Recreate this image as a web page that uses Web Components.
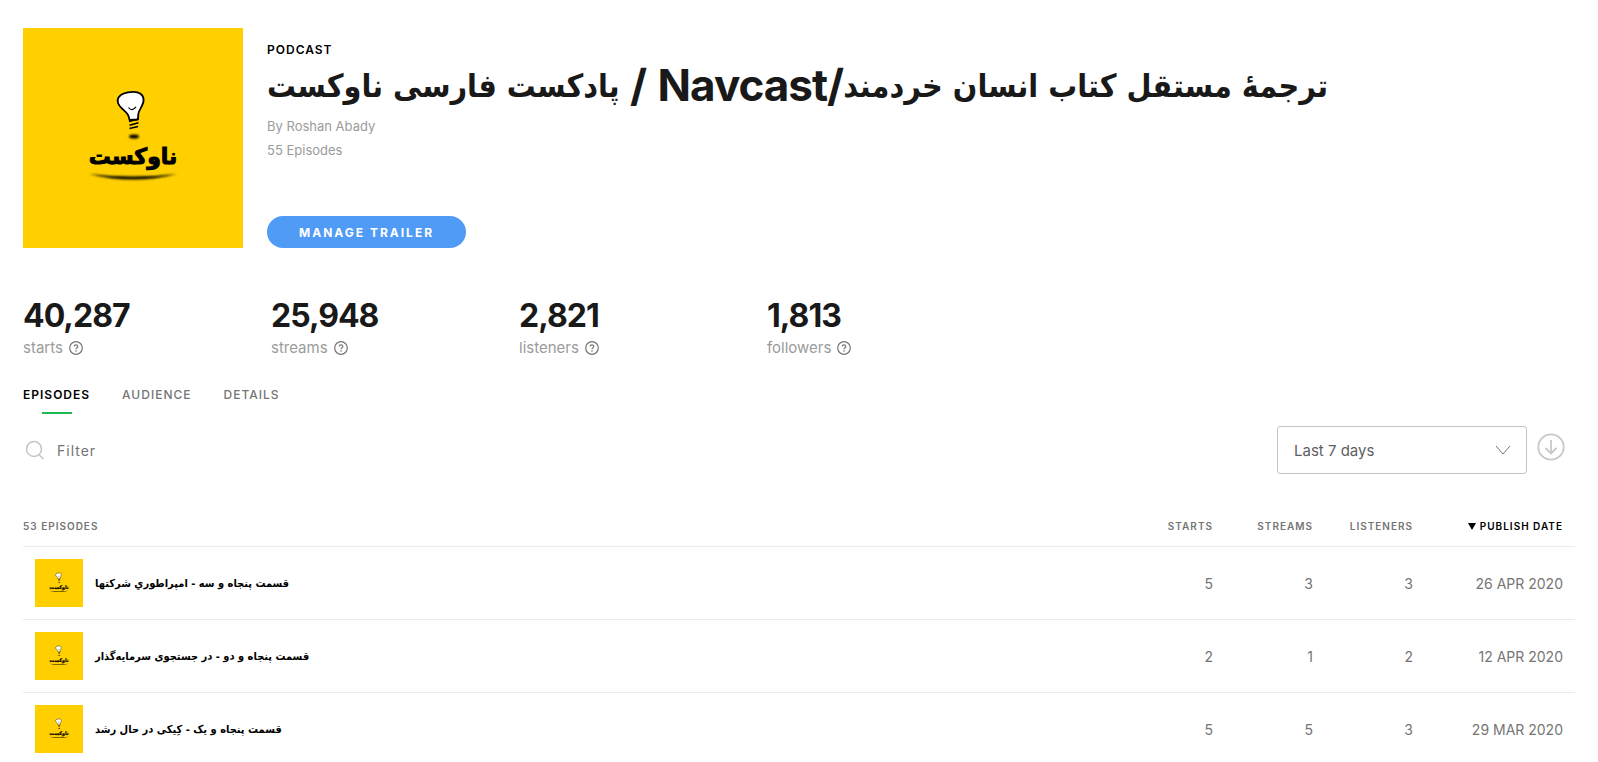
<!DOCTYPE html>
<html lang="en">
<head>
<meta charset="utf-8">
<meta name="viewport" content="width=device-width, initial-scale=1">
<title>Navcast</title>
<style>
:root {
  --ink: #191919;
  --muted: #9b9b9b;
  --grey: #757575;
  --line: #ebebeb;
  --font: Inter, "Liberation Sans", sans-serif;
  --font-fa: "DejaVu Sans Condensed", "DejaVu Sans", sans-serif;
}

body {
  margin: 0;
  background: #fff;
  color: var(--ink);
  font-family: var(--font);
}
</style>
</head>
<body>
<podcast-page>
  <podcast-header author="Roshan Abady" episodes="55">
    <bdi dir="rtl" lang="fa">پادکست فارسی ناوکست</bdi> / Navcast/<bdi dir="rtl" lang="fa">ترجمهٔ مستقل کتاب انسان خردمند</bdi>
  </podcast-header>
  <stat-list>
    <stat-item value="40,287">starts</stat-item>
    <stat-item value="25,948">streams</stat-item>
    <stat-item value="2,821">listeners</stat-item>
    <stat-item value="1,813">followers</stat-item>
  </stat-list>
  <tab-bar></tab-bar>
  <filter-bar></filter-bar>
  <episode-table></episode-table>
</podcast-page>

<script>
function template(html) {
  const t = document.createElement('template');
  t.innerHTML = html;
  return t;
}

function attach(el, tpl) {
  el.attachShadow({ mode: 'open' });
  el.shadowRoot.appendChild(tpl.content.cloneNode(true));
  return el.shadowRoot;
}

const page_template = template(`
<style>
:host {
  display: flex;
  flex-direction: column;
  padding: 28px 23px 0;
}
</style>
<slot></slot>
`);

class PodcastPage extends HTMLElement {
  constructor() {
    super();
    attach(this, page_template);
  }
}

const cover_template = template(`
<style>
:host {
  display: block;
  flex: none;
}

svg {
  display: block;
  width: 100%;
}

text {
  font: 700 22px "DejaVu Sans", sans-serif;
  stroke: #000;
  stroke-width: 1px;
}
</style>
<svg viewBox="0 0 220 220" role="img" aria-label="Navcast cover">
  <defs>
    <filter id="soft" x="-20%" y="-100%" width="140%" height="300%">
      <feGaussianBlur stdDeviation="1"/>
    </filter>
  </defs>
  <rect width="220" height="220" fill="#ffcf00"/>
  <path d="M106.500 92C106 86.500 103.500 84.500 99.500 81C95 77 93.500 73 95.500 69.500C98 65.500 104 64 110 63.800C116 63.600 120.500 66.500 120.600 72C120.700 77.500 116 81 115.300 86L115 91.500Z" fill="#fff" stroke="#000" stroke-width="1.800" stroke-linejoin="round"/>
  <path d="M105.500 79.500Q109 84 113 78.800" fill="none" stroke="#000" stroke-width="1.200"/>
  <path d="M106 93.500l9.500-2.500M106.500 97.300l9-2.500M106.500 100.500l8.500-2" stroke="#000" stroke-width="1.500"/>
  <ellipse cx="111" cy="108.500" rx="5" ry="2" filter="url(#soft)"/>
  <text x="110" y="136" text-anchor="middle" direction="rtl">ناوکست</text>
  <path d="M66 146Q110 151 154 146Q110 157 66 146Z" filter="url(#soft)"/>
</svg>
`);

class PodcastCover extends HTMLElement {
  constructor() {
    super();
    attach(this, cover_template);
  }
}

const header_template = template(`
<style>
:host {
  display: flex;
  gap: 24px;
}

podcast-cover {
  width: 220px;
}

.info {
  display: flex;
  flex-direction: column;
  align-items: flex-start;
  flex: 1;
  padding-top: 12px;
}

.kind {
  margin: 0;
  font-size: 12px;
  line-height: 20px;
  font-weight: 600;
  letter-spacing: 1px;
  color: #000;
}

h1 {
  margin: 0 0 4px;
  font-size: 44px;
  line-height: 50px;
  font-weight: 700;
  letter-spacing: -1px;
}

::slotted(bdi) {
  font-family: var(--font-fa);
  font-size: 32px;
  line-height: 32px;
  letter-spacing: 0;
  vertical-align: 4px;
}

.meta {
  margin: 0;
  font-size: 13px;
  line-height: 24px;
  color: var(--muted);
}

button {
  margin-top: auto;
  height: 32px;
  padding: 0 32px;
  border: 0;
  border-radius: 16px;
  background: #509bf5;
  color: #fff;
  font: 700 12px var(--font);
  letter-spacing: 2px;
}
</style>
<podcast-cover></podcast-cover>
<div class="info">
  <p class="kind">PODCAST</p>
  <h1><slot></slot></h1>
  <p class="meta" id="author"></p>
  <p class="meta" id="episodes"></p>
  <button type="button">MANAGE TRAILER</button>
</div>
`);

class PodcastHeader extends HTMLElement {
  constructor() {
    super();
    const root = attach(this, header_template);
    root.querySelector('#author').textContent = 'By ' + this.getAttribute('author');
    root.querySelector('#episodes').textContent = this.getAttribute('episodes') + ' Episodes';
  }
}

const stat_list_template = template(`
<style>
:host {
  display: grid;
  grid-template-columns: repeat(4, 248px);
  margin-top: 46px;
}
</style>
<slot></slot>
`);

class StatList extends HTMLElement {
  constructor() {
    super();
    attach(this, stat_list_template);
  }
}

const stat_template = template(`
<style>
:host {
  display: block;
}

.value {
  font-size: 32px;
  line-height: 44px;
  font-weight: 700;
  letter-spacing: -1px;
}

.label {
  display: flex;
  align-items: center;
  gap: 6px;
  font-size: 15px;
  line-height: 20px;
  color: var(--muted);
}

button {
  padding: 0;
  border: 0;
  background: none;
  color: var(--grey);
}

svg {
  display: block;
}
</style>
<div class="value"></div>
<div class="label">
  <slot></slot>
  <button type="button" aria-label="Help">
    <svg width="14" height="14" viewBox="0 0 14 14" fill="none" stroke="currentColor" stroke-width="1.200">
      <circle cx="7" cy="7" r="6.300"/>
      <path d="M5.200 5.600C5.200 3.200 8.800 3.300 8.800 5.400C8.800 6.800 7 6.700 7 8.300"/>
      <path d="M7 9.300v1.400"/>
    </svg>
  </button>
</div>
`);

class StatItem extends HTMLElement {
  constructor() {
    super();
    const root = attach(this, stat_template);
    root.querySelector('.value').textContent = this.getAttribute('value');
  }
}

const tabs_template = template(`
<style>
:host {
  display: block;
  margin-top: 28px;
}

nav {
  display: flex;
  gap: 32px;
}

a {
  display: flex;
  flex-direction: column;
  align-items: center;
  color: var(--grey);
  font-size: 12px;
  line-height: 18px;
  font-weight: 500;
  letter-spacing: 1px;
  text-decoration: none;
}

a.active {
  color: #000;
  font-weight: 600;
}

a.active::after {
  content: "";
  width: 30px;
  height: 2px;
  margin-top: 8px;
  background: #1db954;
}
</style>
<nav>
  <a class="active" href="#episodes" aria-current="page">EPISODES</a>
  <a href="#audience">AUDIENCE</a>
  <a href="#details">DETAILS</a>
</nav>
`);

class TabBar extends HTMLElement {
  constructor() {
    super();
    attach(this, tabs_template);
  }
}

const filter_template = template(`
<style>
:host {
  display: flex;
  align-items: center;
  margin-top: 12px;
}

.search {
  display: flex;
  align-items: center;
  flex: 1;
  gap: 12px;
  padding-left: 2px;
  color: #c4c4c8;
}

svg {
  display: block;
  fill: none;
  stroke: currentColor;
}

input {
  flex: 1;
  padding: 0;
  border: 0;
  outline: 0;
  font: 14px var(--font);
  letter-spacing: 1px;
}

input::placeholder {
  color: var(--grey);
  opacity: 1;
}

.range {
  display: grid;
  width: 250px;
}

.range > * {
  grid-area: 1 / 1;
}

.range svg {
  align-self: center;
  justify-self: end;
  margin-right: 16px;
  color: var(--grey);
  pointer-events: none;
}

select {
  height: 48px;
  padding: 0 16px;
  border: 1px solid #c4c4c8;
  border-radius: 3px;
  background: #fff;
  color: #606060;
  font: 15px var(--font);
  appearance: none;
}

button {
  margin: 0 10px;
  padding: 0 0 6px;
  border: 0;
  background: none;
  color: #c8c8cb;
}
</style>
<label class="search">
  <svg width="20" height="20" viewBox="0 0 20 20" stroke-width="1.500">
    <circle cx="9" cy="9" r="7.500"/>
    <path d="M14 14.500L18.500 19"/>
  </svg>
  <input type="text" placeholder="Filter" aria-label="Filter">
</label>
<div class="range">
  <select aria-label="Date range">
    <option>Last 7 days</option>
    <option>Last 30 days</option>
  </select>
  <svg width="16" height="10" viewBox="0 0 16 10"><path d="M1 1l7 8 7-8"/></svg>
</div>
<button type="button" aria-label="Download">
  <svg width="28" height="28" viewBox="0 0 28 28" stroke-width="1.800">
    <circle cx="14" cy="14" r="12.700"/>
    <path d="M14 7v13.500M8.500 15l5.500 5.500 5.500-5.500"/>
  </svg>
</button>
`);

class FilterBar extends HTMLElement {
  constructor() {
    super();
    attach(this, filter_template);
  }
}

const episodes = [
  { title: 'قسمت پنجاه و سه - امپراطوري شرکتها', starts: 5, streams: 3, listeners: 3, date: '26 APR 2020' },
  { title: 'قسمت پنجاه و دو - در جستجوی سرمایه‌گذار', starts: 2, streams: 1, listeners: 2, date: '12 APR 2020' },
  { title: 'قسمت پنجاه و یک - کِیکی در حال رشد', starts: 5, streams: 5, listeners: 3, date: '29 MAR 2020' },
];

const table_template = template(`
<style>
:host {
  display: block;
  margin-top: 32px;
}

table {
  width: 100%;
  table-layout: fixed;
  border-collapse: collapse;
}

col.num {
  width: 100px;
}

col.date {
  width: 150px;
}

th {
  height: 40px;
  padding: 0 12px 0 0;
  border-bottom: 1px solid var(--line);
  color: var(--grey);
  font-size: 10px;
  font-weight: 600;
  letter-spacing: 1px;
  text-align: right;
}

th:first-child {
  text-align: left;
}

th button {
  padding: 0;
  border: 0;
  background: none;
  color: inherit;
  font: inherit;
  letter-spacing: inherit;
}

th.sorted {
  color: #000;
}

th.sorted button::before {
  content: "";
  display: inline-block;
  margin-right: 4px;
  border: 4px solid transparent;
  border-top: 7px solid #000;
  border-bottom: 0;
}

td {
  height: 72px;
  padding: 0 12px 0 0;
  color: var(--grey);
  font-size: 14px;
  text-align: right;
}

tr + tr td {
  border-top: 1px solid var(--line);
}

td:first-child {
  padding-left: 12px;
}

.episode {
  display: flex;
  align-items: center;
  gap: 12px;
}

podcast-cover {
  width: 48px;
}

a {
  color: #000;
  font: 700 11px var(--font-fa);
  text-decoration: none;
}
</style>
<table>
  <colgroup>
    <col><col class="num"><col class="num"><col class="num"><col class="date">
  </colgroup>
  <thead>
    <tr>
      <th scope="col">53 EPISODES</th>
      <th scope="col"><button type="button">STARTS</button></th>
      <th scope="col"><button type="button">STREAMS</button></th>
      <th scope="col"><button type="button">LISTENERS</button></th>
      <th scope="col" class="sorted" aria-sort="descending"><button type="button">PUBLISH DATE</button></th>
    </tr>
  </thead>
  <tbody></tbody>
</table>
`);

class EpisodeTable extends HTMLElement {
  constructor() {
    super();
    const root = attach(this, table_template);
    root.querySelector('tbody').innerHTML = episodes.map(e => `
      <tr>
        <td><div class="episode"><podcast-cover></podcast-cover><a href="#episode" dir="rtl" lang="fa">${e.title}</a></div></td>
        <td>${e.starts}</td>
        <td>${e.streams}</td>
        <td>${e.listeners}</td>
        <td>${e.date}</td>
      </tr>`).join('');
  }
}

customElements.define('podcast-cover', PodcastCover);
customElements.define('podcast-page', PodcastPage);
customElements.define('podcast-header', PodcastHeader);
customElements.define('stat-list', StatList);
customElements.define('stat-item', StatItem);
customElements.define('tab-bar', TabBar);
customElements.define('filter-bar', FilterBar);
customElements.define('episode-table', EpisodeTable);
</script>
</body>
</html>
